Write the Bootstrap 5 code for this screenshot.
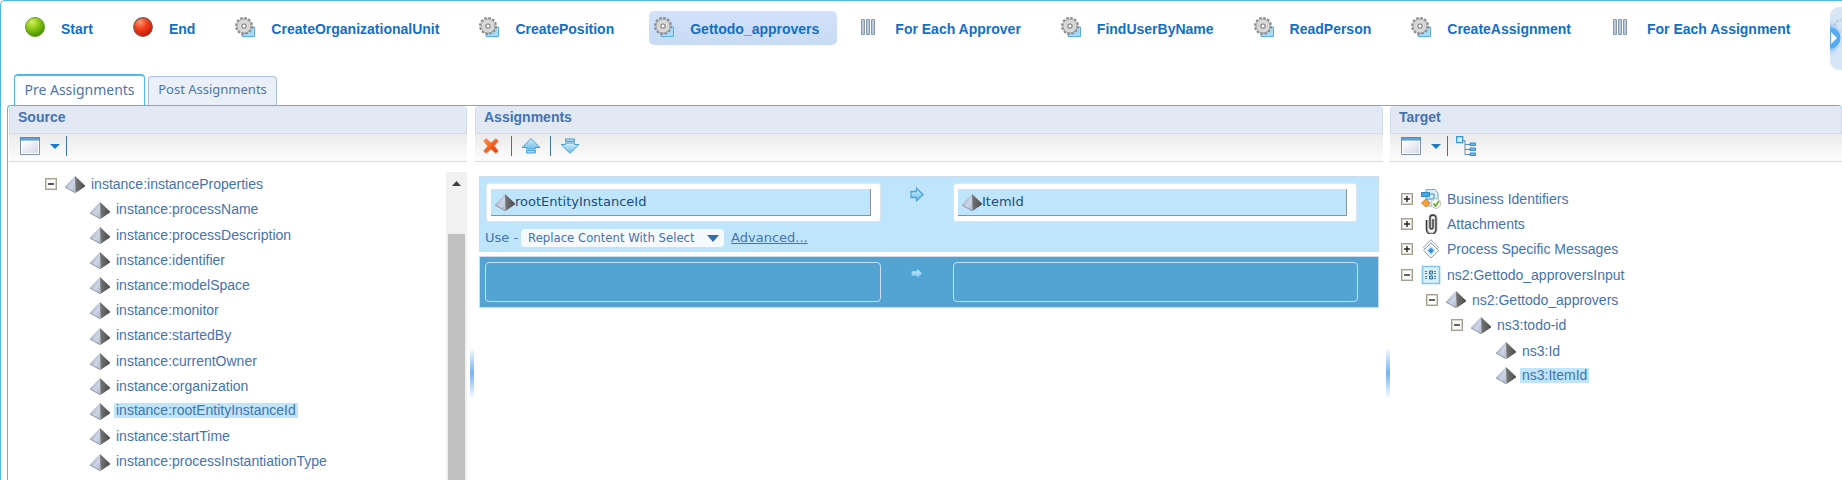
<!DOCTYPE html>
<html lang="en">
<head>
<meta charset="utf-8">
<meta name="viewport" content="width=device-width, initial-scale=1">
<title>Message map</title>
<link href="https://cdn.jsdelivr.net/npm/bootstrap@5.3.0/dist/css/bootstrap.min.css" rel="stylesheet">
<style>
:root{--edge:#4fb9ee;--ink:#4473b0;--strong:#1170c6;--line:#d0dced}
body{font-family:"Liberation Sans",Arial,sans-serif;font-size:14px;line-height:20px;color:var(--ink);background:#fff}
a{color:inherit;text-decoration:none}
svg{display:block;flex:none}
.frame{height:100vh;border:1px solid var(--edge);border-right:0;border-bottom:0;border-top-left-radius:5px}
.steps{height:73px;padding:10px 0 0 19px;gap:17px}
.step{height:34px;padding:0 18px 0 5px;gap:16px;border-radius:5px;color:var(--strong);font-weight:700;white-space:nowrap}
.step svg{margin-bottom:2px}
.step span{margin-top:2px}
.step.active{background:linear-gradient(#d2e2fc,#c8daf4)}
.tool{border:0;padding:0;background:none}
.scroller{top:6px;right:0;width:12px;height:63px;border-radius:9px 0 0 9px;background:#d7e6f6}
.tabs{padding-left:13px;gap:3px}
.tab{border:1px solid #aac0df;border-bottom:0;border-radius:4px 4px 0 0;background:#ebeff7;color:#4d76ac;height:29px;width:129px;padding:0 0 4px;font-family:"Noto Sans",sans-serif;font-size:13px;line-height:20px}
.tab.active{background:#fff;border-color:var(--edge);border-top-width:2px;height:31px;width:131px;padding-bottom:1px;font-size:14px}
.work{margin-left:6px;padding-left:1px;border:solid var(--edge);border-width:1px 0 0 1px;border-radius:4px 4px 0 0;display:grid;grid-template-columns:458fr 8px 908fr 7px 452fr;min-height:0}
.pane{min-width:0;min-height:0}
.pane h2{height:28px;margin:0;padding:0 8px;font-size:14px;line-height:20px;font-weight:700;background:#e2e8f4;border:1px solid var(--line);border-top-color:#dfe7f3;border-radius:4px 4px 0 0}
.tools{height:28px;padding:2px 0 5px 11px;background:linear-gradient(#ebebeb,#fdfdfd);border-bottom:1px solid var(--line)}
.assign-tools{padding-left:8px}
.drop{margin:0 6px 0 10px}
.rule{width:1px;height:20px;background:#3d73ae}
.rule-gap{margin:0 9px}
.rule-first{margin:0 9px 0 12px}
.split{padding-top:243px}
.grip{height:48px;width:4px;margin-left:3px;background:linear-gradient(#f4faff,#78b3f2 50%,#f4faff)}
.tree{list-style:none;margin:0;padding:0}
.source-tree{padding-top:7px}
.root{padding:4px 0 0 36px}
.kids{padding:2px 0 0 81px}
.row-item{height:25px;display:flex;align-items:center}
.row-item svg{margin-right:6px}
.kids .row-item:nth-child(5n+1),.target-tree .row-item:nth-child(3n),.row-item.root{height:26px}
.row-item span{line-height:16px}
.kids .row-item span{margin-bottom:2px}
.row-item.picked span{background:#bfe5fc;padding:0 2px;margin-left:-2px;line-height:15px}
.depth1{padding-left:25px}
.depth2{padding-left:50px}
.depth3{padding-left:95px}
.box-btn{width:12px;height:12px;padding:0;border:1px solid #a79f8e;background:#fff;color:#222;margin-right:8px;box-shadow:inset 0 0 0 1px #d8d3c6}
.track{width:21px;background:#f1f1f1;margin-top:10px;padding:9px 2px 0}
.thumb{background:#c1c1c1;margin-top:48px}
.maps{padding:14px 4px 0}
.map{border:1px solid #cddcec;background:#bfe5fc;color:var(--ink);font-family:"DejaVu Sans",Verdana,sans-serif;font-size:13px}
.pair{display:grid;grid-template-columns:395fr 72px 404fr;padding:6px 21px 0 6px}
.map1{height:76px;margin-bottom:4px}
.map2{height:52px;background:#53a3d3}
.map2 .pair{padding:5px 20px 0 5px}
.slot{background:#fff;border:1px solid #dbe6f2;border-radius:3px;height:39px;padding:5px 9px 5px 4px}
.arrow{margin:4px auto 0}
.slot div{height:27px;background:#bfe5fc;border:solid #8793a3;border-width:0 1px 1px 0;padding-left:4px;color:#174f7c}
.empty{height:40px;border:1px solid #c9def0;border-radius:4px}
.mode-row{gap:3px;padding:6px 0 0 5px}
.pick{width:203px;height:18px;border:0;border-radius:4px;padding:0 7px;color:var(--ink);font-family:"DejaVu Sans Condensed","DejaVu Sans",sans-serif;font-size:13px;line-height:18px;appearance:none;background:#f6f9fe url("data:image/svg+xml,%3Csvg xmlns='http://www.w3.org/2000/svg' width='12' height='7'%3E%3Cpath d='M0 0h12L6 7z' fill='%232f6cb0'/%3E%3C/svg%3E") no-repeat right 5px center}
.adv{text-decoration:underline;margin-left:4px}
.target-tree{padding:24px 0 0 11px}
</style>
<script src="https://cdn.jsdelivr.net/npm/bootstrap@5.3.0/dist/js/bootstrap.bundle.min.js"></script>
</head>
<body>
<svg width="0" height="0" class="position-absolute" aria-hidden="true">
<defs>
<radialGradient id="gr" cx=".35" cy=".25" r=".8"><stop offset="0" stop-color="#d2f05a"/><stop offset=".45" stop-color="#8cc814"/><stop offset="1" stop-color="#3f8a00"/></radialGradient>
<radialGradient id="re" cx=".35" cy=".25" r=".8"><stop offset="0" stop-color="#ff9a70"/><stop offset=".45" stop-color="#f4401c"/><stop offset="1" stop-color="#c41402"/></radialGradient>
<linearGradient id="pl" x1="0" x2="1" y1="0" y2="1"><stop offset="0" stop-color="#8f99a8"/><stop offset=".6" stop-color="#ccd6e8"/><stop offset="1" stop-color="#a9b4c6"/></linearGradient>
<linearGradient id="pr" x1="0" x2="1"><stop offset="0" stop-color="#777"/><stop offset="1" stop-color="#4b4b4b"/></linearGradient>
<linearGradient id="bl" x1="0" x2="0" y1="0" y2="1"><stop offset="0" stop-color="#d3effc"/><stop offset="1" stop-color="#6dbde9"/></linearGradient>
<linearGradient id="wn" x1="0" x2="1" y1="0" y2="1"><stop offset="0" stop-color="#fff"/><stop offset="1" stop-color="#d3d8ea"/></linearGradient>
<linearGradient id="xx" x1="0" x2="1" y1="0" y2="1"><stop offset="0" stop-color="#ff9a3c"/><stop offset="1" stop-color="#e02a08"/></linearGradient>
</defs>
<symbol id="ball-g" viewBox="0 0 20 20"><circle cx="10" cy="10" r="9.5" fill="url(#gr)" stroke="#6a9a2c"/></symbol>
<symbol id="ball-r" viewBox="0 0 20 20"><circle cx="10" cy="10" r="9.3" fill="url(#re)" stroke="#7a5148" stroke-width="1.2"/></symbol>
<symbol id="gear" viewBox="0 0 20 20"><path d="M7 10h12.5v9.500h-12.500z" fill="#a9dafa" stroke="#58aee0"/><circle cx="9" cy="9" r="8" fill="none" stroke="#8c8c8c" stroke-width="2" stroke-dasharray="2.600 1.589"/><circle cx="9" cy="9" r="7" fill="#dcdcdc" stroke="#929292" stroke-width=".9"/><circle cx="9" cy="9" r="4.200" fill="#f5f5f5" stroke="#c6c6c6"/><circle cx="9" cy="9" r="2.200" fill="#fff" stroke="#858585" stroke-width="1.300"/></symbol>
<symbol id="bars" viewBox="0 0 20 20"><g fill="#b9c8dc" stroke="#8798b0"><path d="M2.500 2.500h3v15h-3zM7.500 2.500h3v15h-3zM12.500 2.500h3v15h-3z"/></g></symbol>
<symbol id="pyr" viewBox="0 0 20 17"><path d="M10 0 0 10.500l.5 1L10.500 17z" fill="url(#pl)"/><path d="m10 0 10 9.500v1L10.500 17z" fill="url(#pr)"/><path d="m0 11 10 5.700" stroke="#7f8794" stroke-width=".8"/></symbol>
<symbol id="win" viewBox="0 0 20 18"><path d="M.5.5h19v17H.5z" fill="#fff" stroke="#7e91a8"/><path d="M2 5h16v11H2z" fill="url(#wn)"/><path d="M0 0h20v3.500H0z" fill="#4a90cf"/><path d="M1 2h18" stroke="#6cb2e6"/></symbol>
<symbol id="up" viewBox="0 0 20 16"><path d="M10 .7 19 9.500h-4.500V11h-9V9.500H1z" fill="url(#bl)" stroke="#489fd3"/><path d="M5.500 12.500h9v2.500h-9z" fill="#a9dcf5" stroke="#489fd3"/></symbol>
<symbol id="arr" viewBox="0 0 14 15"><path d="M1 4.500h5.500V1.200L13 7.500l-6.500 6.300v-3.300H1z" fill="url(#bl)" stroke="#4aa6db" stroke-width="1.300"/></symbol>
<symbol id="minus" viewBox="0 0 10 10"><path d="M2 5h6" stroke="#222" stroke-width="1.400"/></symbol>
<symbol id="plus" viewBox="0 0 10 10"><path d="M2 5h6M5 2v6" stroke="#222" stroke-width="1.400"/></symbol>
<symbol id="caret" viewBox="0 0 10 5"><path d="M0 0h10L5 5z" fill="#1c7bc8"/></symbol>
</svg>

<div class="frame d-flex flex-column overflow-hidden position-relative">
  <nav class="steps d-flex flex-shrink-0" aria-label="Steps">
    <a href="#" class="step d-flex align-items-center"><svg width="20" height="20"><use href="#ball-g"/></svg><span>Start</span></a>
    <a href="#" class="step d-flex align-items-center"><svg width="20" height="20"><use href="#ball-r"/></svg><span>End</span></a>
    <a href="#" class="step d-flex align-items-center"><svg width="20" height="20"><use href="#gear"/></svg><span>CreateOrganizationalUnit</span></a>
    <a href="#" class="step d-flex align-items-center"><svg width="20" height="20"><use href="#gear"/></svg><span>CreatePosition</span></a>
    <a href="#" class="step active d-flex align-items-center" aria-current="step"><svg width="20" height="20"><use href="#gear"/></svg><span>Gettodo_approvers</span></a>
    <a href="#" class="step d-flex align-items-center"><svg width="20" height="20"><use href="#bars"/></svg><span>For Each Approver</span></a>
    <a href="#" class="step d-flex align-items-center"><svg width="20" height="20"><use href="#gear"/></svg><span>FindUserByName</span></a>
    <a href="#" class="step d-flex align-items-center"><svg width="20" height="20"><use href="#gear"/></svg><span>ReadPerson</span></a>
    <a href="#" class="step d-flex align-items-center"><svg width="20" height="20"><use href="#gear"/></svg><span>CreateAssignment</span></a>
    <a href="#" class="step d-flex align-items-center"><svg width="20" height="20"><use href="#bars"/></svg><span>For Each Assignment</span></a>
  </nav>
  <button class="tool scroller position-absolute overflow-hidden" type="button" aria-label="Scroll right">
    <svg width="12" height="63" viewBox="0 0 12 63"><defs><radialGradient id="glow"><stop offset="0" stop-color="#2f8fe8"/><stop offset=".5" stop-color="#7fbcf2"/><stop offset="1" stop-color="#d7e6f6" stop-opacity="0"/></radialGradient></defs><circle cx="11" cy="19" r="6" fill="none" stroke="#c2cfdd" stroke-width="3" stroke-dasharray="3 1.500"/><ellipse cx="0" cy="31" rx="13" ry="20" fill="url(#glow)"/><circle cx="0" cy="31" r="10.500" fill="#55acf2"/><path d="m1 25 6 6-6 6z" fill="#fff"/></svg>
  </button>

  <div class="tabs d-flex align-items-end flex-shrink-0" role="tablist">
    <button class="tab active" role="tab" type="button" aria-selected="true">Pre Assignments</button>
    <button class="tab" role="tab" type="button" aria-selected="false">Post Assignments</button>
  </div>

  <main class="work flex-grow-1">
    <section class="pane d-flex flex-column">
      <h2>Source</h2>
      <div class="tools d-flex">
        <button class="tool d-flex align-items-center" type="button" aria-label="View"><svg width="20" height="18"><use href="#win"/></svg><svg class="drop" width="10" height="5"><use href="#caret"/></svg></button>
        <span class="rule"></span>
      </div>
      <div class="d-flex flex-grow-1">
        <ul class="tree source-tree flex-grow-1">
          <li><div class="row-item root"><button class="box-btn" type="button" aria-label="Collapse"><svg width="10" height="10"><use href="#minus"/></svg></button><svg width="20" height="17"><use href="#pyr"/></svg><span>instance:instanceProperties</span></div>
            <ul class="tree kids">
              <li class="row-item"><svg width="20" height="17"><use href="#pyr"/></svg><span>instance:processName</span></li>
              <li class="row-item"><svg width="20" height="17"><use href="#pyr"/></svg><span>instance:processDescription</span></li>
              <li class="row-item"><svg width="20" height="17"><use href="#pyr"/></svg><span>instance:identifier</span></li>
              <li class="row-item"><svg width="20" height="17"><use href="#pyr"/></svg><span>instance:modelSpace</span></li>
              <li class="row-item"><svg width="20" height="17"><use href="#pyr"/></svg><span>instance:monitor</span></li>
              <li class="row-item"><svg width="20" height="17"><use href="#pyr"/></svg><span>instance:startedBy</span></li>
              <li class="row-item"><svg width="20" height="17"><use href="#pyr"/></svg><span>instance:currentOwner</span></li>
              <li class="row-item"><svg width="20" height="17"><use href="#pyr"/></svg><span>instance:organization</span></li>
              <li class="row-item picked"><svg width="20" height="17"><use href="#pyr"/></svg><span>instance:rootEntityInstanceId</span></li>
              <li class="row-item"><svg width="20" height="17"><use href="#pyr"/></svg><span>instance:startTime</span></li>
              <li class="row-item"><svg width="20" height="17"><use href="#pyr"/></svg><span>instance:processInstantiationType</span></li>
            </ul></li>
        </ul>
        <div class="track d-flex flex-column"><svg class="mx-auto" width="9" height="5"><path d="M0 5h9L4.500 0z" fill="#404040"/></svg><div class="thumb flex-grow-1"></div></div>
      </div>
    </section>
    <div class="split"><div class="grip"></div></div>
    <section class="pane">
      <h2>Assignments</h2>
      <div class="tools assign-tools d-flex">
        <button class="tool d-flex align-items-center" type="button" aria-label="Delete"><svg width="16" height="16" viewBox="0 0 16 16"><path d="M3 .7 8 5 13 .7 15.300 3l-4.300 5 4.300 5-2.300 2.300L8 11l-5 4.300L.7 13 5 8 .7 3z" fill="url(#xx)" stroke="#ef7a55" stroke-width="1"/></svg></button>
        <span class="rule rule-first"></span>
        <button class="tool d-flex align-items-center" type="button" aria-label="Move up"><svg width="20" height="16"><use href="#up"/></svg></button>
        <span class="rule rule-gap"></span>
        <button class="tool d-flex align-items-center" type="button" aria-label="Move down"><svg width="20" height="16" viewBox="0 0 20 16"><path d="M5.500 1h9v2.500h-9z" fill="#a9dcf5" stroke="#489fd3"/><path d="M5.500 5h9v1.500H19L10 15.300 1 6.500h4.500z" fill="url(#bl)" stroke="#489fd3"/></svg></button>
      </div>
      <div class="maps">
        <div class="map map1">
          <div class="pair">
            <div class="slot"><div class="d-flex align-items-center"><svg width="20" height="17"><use href="#pyr"/></svg>rootEntityInstanceId</div></div>
            <svg class="arrow" width="14" height="15"><use href="#arr"/></svg>
            <div class="slot"><div class="d-flex align-items-center"><svg width="20" height="17"><use href="#pyr"/></svg>ItemId</div></div>
          </div>
          <div class="mode-row d-flex align-items-center">
            <label for="mode">Use -</label>
            <select id="mode" class="pick"><option>Replace Content With Select</option></select>
            <a href="#" class="adv">Advanced...</a>
          </div>
        </div>
        <div class="map map2">
          <div class="pair"><div class="empty"></div><svg class="arrow" width="14" height="15"><use href="#arr"/></svg><div class="empty"></div></div>
        </div>
      </div>
    </section>
    <div class="split"><div class="grip"></div></div>
    <section class="pane">
      <h2>Target</h2>
      <div class="tools d-flex">
        <button class="tool d-flex align-items-center" type="button" aria-label="View"><svg width="20" height="18"><use href="#win"/></svg><svg class="drop" width="10" height="5"><use href="#caret"/></svg></button>
        <span class="rule"></span>
        <button class="tool ms-2" type="button" aria-label="Show structure"><svg width="20" height="20" viewBox="0 0 20 20"><path d="M7 4.500h2v14h6M9 8.500h6M9 13.500h6" fill="none" stroke="#6b8aa8"/><path d="M.7.700h6v6h-6z" fill="#c6f0ff" stroke="#3f94d0" stroke-width="1.300"/><path d="M14 7h5.500v2.500H14zM14 12h5.500v2.500H14zM14 17h5.500v2.500H14z" fill="#74c0f0" stroke="#3788c8"/></svg></button>
      </div>
      <ul class="tree target-tree">
        <li class="row-item"><button class="box-btn" type="button" aria-label="Expand"><svg width="10" height="10"><use href="#plus"/></svg></button>
          <svg width="20" height="20" viewBox="0 0 20 20"><path d="M5 .5h9l3 3.500v13H5z" fill="#d9edfa" stroke="#6fa9d4"/><path d="M.5 3.500h8v4h-8z" fill="#49a8e6" stroke="#2f86c4"/><path d="M9 5h4v5H5v3" fill="none" stroke="#3f8fca"/><path d="m5 10 4 4-4 4-4.500-4z" fill="#f7a13a" stroke="#d98328"/><circle cx="15" cy="14.500" r="4.800" fill="#f2f6ee" stroke="#b9c4b6"/><path d="m12.500 14.500 2 2.500 3.500-5" fill="none" stroke="#58a828" stroke-width="1.500"/></svg><span>Business Identifiers</span></li>
        <li class="row-item"><button class="box-btn" type="button" aria-label="Expand"><svg width="10" height="10"><use href="#plus"/></svg></button>
          <svg width="20" height="20" viewBox="0 0 20 20"><path d="M6 6v9a4 4 0 0 0 9 0V4a3 3 0 0 0-6 0v9a1.500 1.500 0 0 0 3 0V5" fill="none" stroke="#ccc" stroke-width="3"/><path d="M5.500 6v9.500a4 4 0 0 0 9.500 0V4a3 3 0 0 0-6 0v9.500a1.500 1.500 0 0 0 3 0V5" fill="none" stroke="#333" stroke-width="1.300"/></svg><span>Attachments</span></li>
        <li class="row-item"><button class="box-btn" type="button" aria-label="Expand"><svg width="10" height="10"><use href="#plus"/></svg></button>
          <svg width="20" height="20" viewBox="0 0 20 20"><path d="m10 .7 7.500 7.500-7.500 7.500-7.500-7.500z" fill="#f3f6fa" stroke="#9aa9ba"/><path d="m10 4 7.500 7.500L10 19l-7.500-7.500z" fill="#fff" stroke="#8e9eb0"/><path d="m10 8 3.700 3.600L10 15.300l-3.700-3.700z" fill="#2f93e4" stroke="#b7dcf7" stroke-width="1.200"/></svg><span>Process Specific Messages</span></li>
        <li class="row-item"><button class="box-btn" type="button" aria-label="Collapse"><svg width="10" height="10"><use href="#minus"/></svg></button>
          <svg width="20" height="20" viewBox="0 0 20 20"><path d="M1.500 1.500h17v17h-17z" fill="#d9f0fc" stroke="#84c4e4" stroke-width="1.600"/><g fill="none" stroke="#457a9e" stroke-dasharray="2 1"><path d="M4 6.500h3M4 8.500h3M4 11.500h3M4 13.500h3M13 6.500h3M13 8.500h3M13 11.500h3M13 13.500h3"/></g><path d="M8.500 6h3v3h-3zM8.500 11h3v3h-3z" fill="#8fd0f4" stroke="#3a6f94"/></svg><span>ns2:Gettodo_approversInput</span></li>
        <li class="row-item depth1"><button class="box-btn" type="button" aria-label="Collapse"><svg width="10" height="10"><use href="#minus"/></svg></button><svg width="20" height="17"><use href="#pyr"/></svg><span>ns2:Gettodo_approvers</span></li>
        <li class="row-item depth2"><button class="box-btn" type="button" aria-label="Collapse"><svg width="10" height="10"><use href="#minus"/></svg></button><svg width="20" height="17"><use href="#pyr"/></svg><span>ns3:todo-id</span></li>
        <li class="row-item depth3"><svg width="20" height="17"><use href="#pyr"/></svg><span>ns3:Id</span></li>
        <li class="row-item depth3 picked"><svg width="20" height="17"><use href="#pyr"/></svg><span>ns3:ItemId</span></li>
      </ul>
    </section>
  </main>
</div>
</body>
</html>
